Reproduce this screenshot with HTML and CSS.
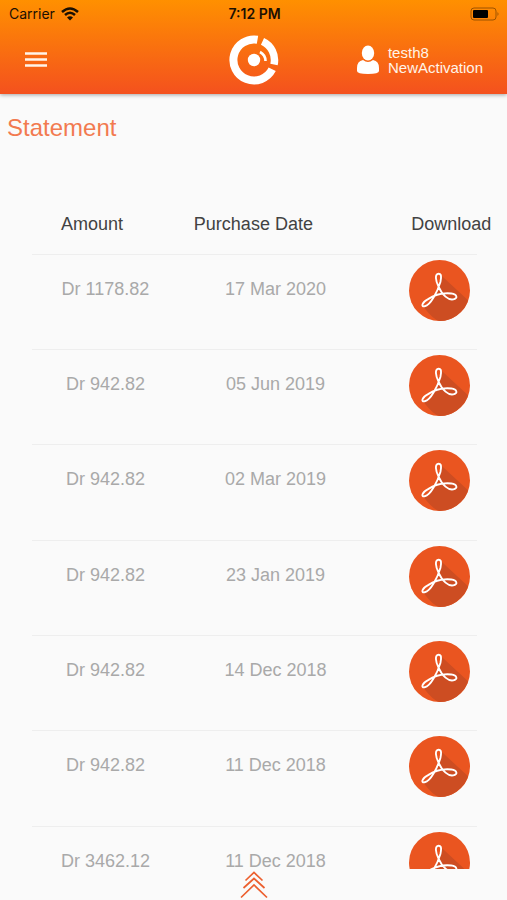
FILE: index.html
```html
<!DOCTYPE html>
<html lang="en">
<head>
<meta charset="utf-8">
<meta name="viewport" content="width=device-width, initial-scale=1">
<title>Statement</title>
<link rel="stylesheet" href="styles.css">
</head>
<body>
<svg class="defs" aria-hidden="true">
  <symbol id="pdf" viewBox="0 0 62 62">
    <circle cx="31" cy="31" r="31" fill="#ea5520"/>
    <path d="M32 15 60 41A31 31 0 0 1 31 62Q25 61 15 48L25 39 31 28Z" fill="#cd4d22"/>
    <path d="M30 14C26 14 27 21 30 27C34 36 40 41 45 40C50 39 49 35 43 34C34 33 25 36 19 40C13 43 12 48 16 47C22 46 29 32 32 22C33 17 33 14 30 14Z" fill="none" stroke="#fff" stroke-width="1.900" stroke-linejoin="round"/>
  </symbol>
</svg>
<header class="top">
  <div class="status">
    <div class="carrier">
      <span>Carrier</span>
      <svg width="18" height="14" viewBox="0 0 18 14" aria-hidden="true">
        <path d="M1 5Q9-2 17 5M4 8Q9 3.500 14 8" fill="none" stroke="#1b1002" stroke-width="2.500"/>
        <path d="M6 10.500Q9 8 12 10.500L9 13.500Z" fill="#1b1002"/>
      </svg>
    </div>
    <strong class="time">7:12 PM</strong>
    <svg class="battery" width="30" height="14" viewBox="0 0 30 14" aria-hidden="true">
      <rect x="1" y="1" width="25" height="12" rx="3" fill="none" stroke="#9c5300"/>
      <rect x="3" y="3" width="15" height="8" rx="1" fill="#000"/>
      <path d="M27.500 5Q29.500 7 27.500 9Z" fill="#9c5300"/>
    </svg>
  </div>
  <nav class="bar">
    <button class="menu" type="button" aria-label="Menu">
      <svg width="24" height="18" viewBox="0 0 24 18"><path d="M1 2.500H23M1 8.500H23M1 14.500H23" stroke="#fff4e8" stroke-width="2.700"/></svg>
    </button>
    <a class="logo" href="#" aria-label="Home">
      <svg width="50" height="50" viewBox="0 0 50 50">
        <g fill="none" stroke="#fff">
          <path d="M28.500 4.800A20.500 20.500 0 1 0 43.200 34.300" stroke-width="8"/>
          <path d="M33.500 6.400A20.500 20.500 0 0 1 45 29.500" stroke-width="7.500"/>
          <path d="M31 17Q36.500 20 36.500 26" stroke-width="2.600"/>
        </g>
        <circle cx="25" cy="25" r="6.200" fill="#fff"/>
      </svg>
    </a>
    <a class="user" href="#">
      <svg width="24" height="30" viewBox="0 0 24 30" aria-hidden="true">
        <ellipse cx="12" cy="8" rx="6.200" ry="7.500" fill="#fff"/>
        <path d="M7 15Q12 19 17 15Q23 16 23 23V26Q23 29 12 29Q1 29 1 26V23Q1 16 7 15Z" fill="#fff"/>
      </svg>
      <span>testh8<br>NewActivation</span>
    </a>
  </nav>
</header>
<main class="page">
  <h1>Statement</h1>
  <div class="list">
    <table>
      <colgroup><col class="c-amount"><col class="c-date"><col></colgroup>
      <thead><tr><th scope="col">Amount</th><th scope="col">Purchase Date</th><th scope="col">Download</th></tr></thead>
      <tbody>
        <tr><td>Dr 1178.82</td><td>17 Mar 2020</td><td><a href="#" aria-label="Download PDF"><svg><use href="#pdf"/></svg></a></td></tr>
        <tr><td>Dr 942.82</td><td>05 Jun 2019</td><td><a href="#" aria-label="Download PDF"><svg><use href="#pdf"/></svg></a></td></tr>
        <tr><td>Dr 942.82</td><td>02 Mar 2019</td><td><a href="#" aria-label="Download PDF"><svg><use href="#pdf"/></svg></a></td></tr>
        <tr><td>Dr 942.82</td><td>23 Jan 2019</td><td><a href="#" aria-label="Download PDF"><svg><use href="#pdf"/></svg></a></td></tr>
        <tr><td>Dr 942.82</td><td>14 Dec 2018</td><td><a href="#" aria-label="Download PDF"><svg><use href="#pdf"/></svg></a></td></tr>
        <tr><td>Dr 942.82</td><td>11 Dec 2018</td><td><a href="#" aria-label="Download PDF"><svg><use href="#pdf"/></svg></a></td></tr>
        <tr><td>Dr 3462.12</td><td>11 Dec 2018</td><td><a href="#" aria-label="Download PDF"><svg><use href="#pdf"/></svg></a></td></tr>
      </tbody>
    </table>
  </div>
</main>
<footer class="foot">
  <button type="button" aria-label="Open panel">
    <svg width="28" height="28" viewBox="0 0 28 28"><path d="M5.500 9.500 14 1.500 22.500 9.500M3.500 17 14 7.500 24.500 17M1 26.500 14 14 27 26.500" fill="none" stroke="#ec5f2e" stroke-width="1.700"/></svg>
  </button>
</footer>
</body>
</html>
```
FILE: styles.css
```css
* { box-sizing: border-box; }

body {
  margin: 0;
  height: 100vh;
  display: flex;
  flex-direction: column;
  background: #fafafa;
  color: #424242;
  font-family: "Liberation Sans", Arial, sans-serif;
}

svg { display: block; }
button { border: 0; padding: 0; background: none; }
a { color: inherit; text-decoration: none; }
.defs { position: absolute; width: 0; height: 0; }

.top {
  flex: none;
  padding-bottom: 7px;
  background: linear-gradient(#ff9000, #f4511e);
  box-shadow: 0 1px 4px rgba(0, 0, 0, .35);
}

.status, .bar {
  display: grid;
  grid-template-columns: 1fr auto 1fr;
  align-items: center;
}

.status {
  height: 28px;
  padding: 0 7px 0 9px;
  color: #1b1002;
  font: 14px/18px Inter, sans-serif;
}
.carrier { display: flex; align-items: center; gap: 6px; }
.time { font-weight: 600; }
.battery { justify-self: end; }

.bar { height: 59px; padding: 5px 24px 0; }
.menu { justify-self: start; }
.user {
  justify-self: end;
  display: flex;
  align-items: center;
  gap: 8px;
  color: #fff4e8;
  font-size: 15px;
  line-height: 15px;
}

.page {
  flex: 1;
  min-height: 0;
  display: flex;
  flex-direction: column;
}
h1 {
  margin: 20px 7px 0;
  color: #f27a50;
  font-size: 24px;
  font-weight: 400;
  line-height: 28px;
}

.list {
  flex: 1;
  min-height: 0;
  margin-top: 51px;
  padding: 0 30px 0 32px;
  overflow: hidden;
}
table {
  width: 100%;
  table-layout: fixed;
  border-collapse: separate;
  border-spacing: 0;
  font-size: 18px;
  line-height: 22px;
}
.c-amount { width: 33%; }
.c-date { width: 43%; }

th {
  height: 61px;
  padding: 0;
  font-weight: 400;
  text-align: left;
  white-space: nowrap;
}
th:nth-child(1) { padding-left: 29px; }
th:nth-child(2) { padding-left: 15px; }
th:nth-child(3) { padding-left: 41px; }

td {
  height: 95px;
  padding: 23px 0 0;
  border-top: 1px solid #eee;
  color: #a9a9a9;
  text-align: center;
  vertical-align: top;
}
tr:nth-child(3n) td { height: 96px; }
td:nth-child(2) { padding-left: 2px; }
td:nth-child(3) { padding: 5px 0 0 39px; }
td svg { width: 61px; height: 61px; }

.foot {
  flex: none;
  display: flex;
  justify-content: center;
  height: 31px;
  padding-top: 1px;
}
```
